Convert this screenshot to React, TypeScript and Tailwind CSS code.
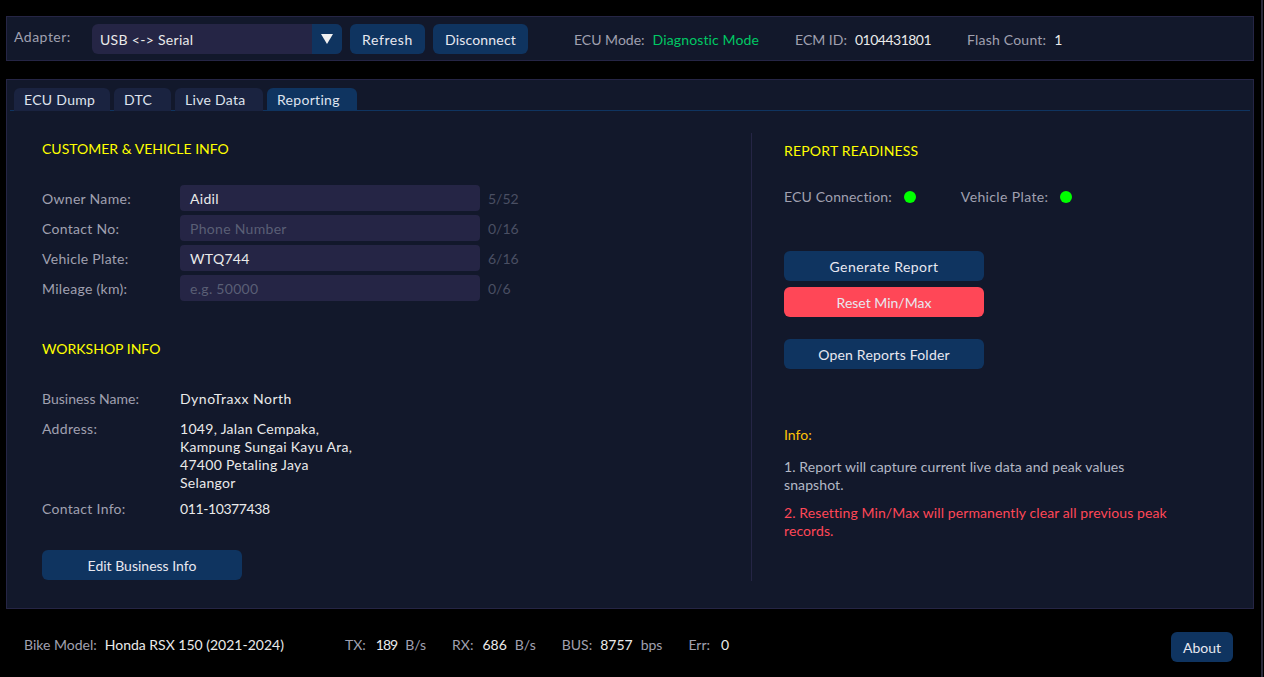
const font = "font-['Lato','Open_Sans',sans-serif]";

const fields = [
  { label: "Owner Name:", value: "Aidil", placeholder: "", count: "5/52" },
  { label: "Contact No:", value: "", placeholder: "Phone Number", count: "0/16" },
  { label: "Vehicle Plate:", value: "WTQ744", placeholder: "", count: "6/16" },
  { label: "Mileage (km):", value: "", placeholder: "e.g. 50000", count: "0/6" },
];

const tabs = [
  { name: "ECU Dump", width: "w-[96px]" },
  { name: "DTC", width: "w-[57px]" },
  { name: "Live Data", width: "w-[88px]" },
  { name: "Reporting", width: "w-[90px]" },
];

const buttonClass =
  "flex items-center justify-center rounded-md bg-[#0f3460] text-[14px] text-[#e8e8f0]";

function Stat({ label, value, unit, valueClass }: { label: string; value: string; unit?: string; valueClass?: string }) {
  return (
    <div className="flex items-center">
      <span className="text-[#a0a0b0]">{label}</span>
      <span className={`${valueClass ?? "ml-2 text-[#eaeaea]"}`}>{value}</span>
      {unit && <span className="ml-2 text-[#a0a0b0]">{unit}</span>}
    </div>
  );
}

function Dot() {
  return <span className="ml-3 h-3 w-3 rounded-full bg-[#00ff00]" />;
}

export default function App() {
  return (
    <div className={`flex h-[677px] w-[1264px] overflow-hidden bg-black text-[14px] ${font}`}>
      <div className="flex w-[1261px] flex-col pl-[6px] pr-[7px]">
        <div className="mt-4 flex h-[45px] items-center border border-[#252545] bg-[#12182b] pl-[7px]">
          <span className="-mt-1 w-[78px] tracking-[0.5px] text-[#a0a0b0]">Adapter:</span>
          <div className="flex h-[30px] w-[250px] overflow-hidden rounded-md bg-[#252545]">
            <span className="flex flex-1 items-center pl-2 pt-[2px] tracking-[0.3px] text-[#eaeaea]">USB &lt;-&gt; Serial</span>
            <span className="flex w-[30px] items-center justify-center bg-[#0f3460]">
              <svg width="14" height="12" viewBox="0 0 14 12"><path d="M1 1h12L7 11z" fill="#f0f0f0" /></svg>
            </span>
          </div>
          <button className={`${buttonClass} ml-2 h-[30px] w-[75px] pt-[2px] tracking-[0.6px]`}>Refresh</button>
          <button className={`${buttonClass} ml-2 h-[30px] w-[95px] pt-[2px] tracking-[0.2px]`}>Disconnect</button>
          <div className="ml-[46px] pt-[2px]"><Stat label="ECU Mode:" value="Diagnostic Mode" valueClass="ml-2 tracking-[0.13px] text-[#00c864]" /></div>
          <div className="ml-9 pt-[2px]"><Stat label="ECM ID:" value="0104431801" valueClass="ml-2 tracking-[-0.5px] text-[#eaeaea]" /></div>
          <div className="ml-9 pt-[2px] tracking-[0.2px]"><Stat label="Flash Count:" value="1" /></div>
        </div>

        <div className="mt-[18px] flex h-[530px] flex-col border border-[#252545] bg-[#12182b] px-[3px] pt-2">
          <div className="flex h-[23px] gap-1 border-b border-[#0f3460] pl-1">
            {tabs.map((tab) => (
              <div
                key={tab.name}
                className={`flex h-[23px] items-center rounded-t-md pl-[10px] tracking-[0.3px] text-[#dfe3ee] ${tab.width} ${tab.name === "Reporting" ? "bg-[#0f3460]" : "bg-[#1a2340]"}`}
              >
                {tab.name}
              </div>
            ))}
          </div>

          <div className="flex flex-1 pt-[22px]">
            <div className="flex h-[448px] w-[742px] flex-col border-r border-[#252545] pl-[32px] tracking-[0.3px]">
              <h3 className="mt-1 h-[18px] translate-y-[3px] leading-[18px] tracking-normal text-[#ffff00]">CUSTOMER &amp; VEHICLE INFO</h3>
              <div className="mt-[30px] flex flex-col gap-1">
                {fields.map((field) => (
                  <div key={field.label} className="flex h-[26px] items-center">
                    <span className="w-[138px] text-[#a0a0b0]">{field.label}</span>
                    <div className="flex h-[26px] w-[300px] items-center rounded bg-[#252545] pl-[10px]">
                      {field.value ? (
                        <span className="text-[#eaeaea]">{field.value}</span>
                      ) : (
                        <span className="text-[#5a5f75]">{field.placeholder}</span>
                      )}
                    </div>
                    <span className="ml-2 tracking-normal text-[#4a4f63]">{field.count}</span>
                  </div>
                ))}
              </div>

              <h3 className="mt-[39px] h-[18px] leading-[18px] tracking-normal text-[#ffff00]">WORKSHOP INFO</h3>
              <div className="mt-[31px] flex h-[18px] items-center">
                <span className="w-[138px] tracking-normal text-[#a0a0b0]">Business Name:</span>
                <span className="tracking-[0.5px] text-[#eaeaea]">DynoTraxx North</span>
              </div>
              <div className="mt-[13px] flex">
                <span className="w-[138px] leading-[18px] text-[#a0a0b0]">Address:</span>
                <span className="leading-[18px] text-[#eaeaea]">
                  1049, Jalan Cempaka,
                  <br />
                  Kampung Sungai Kayu Ara,
                  <br />
                  47400 Petaling Jaya
                  <br />
                  Selangor
                </span>
              </div>
              <div className="mt-[7px] flex h-[18px] items-center">
                <span className="w-[138px] text-[#a0a0b0]">Contact Info:</span>
                <span className="tracking-[-0.4px] text-[#eaeaea]">011-10377438</span>
              </div>
              <button className={`${buttonClass} mt-[33px] h-[30px] w-[200px] tracking-normal`}>Edit Business Info</button>
            </div>

            <div className="flex flex-col pl-[32px]">
              <h3 className="mt-[9px] h-[18px] leading-[18px] tracking-[0.2px] text-[#ffff00]">REPORT READINESS</h3>
              <div className="mt-[28px] flex h-[18px] items-center text-[#a0a0b0]">
                <span className="-mt-[2px] tracking-[0.15px]">ECU Connection:</span>
                <Dot />
                <span className="-mt-[2px] ml-[45px] tracking-[0.37px]">Vehicle Plate:</span>
                <Dot />
              </div>
              <button className={`${buttonClass} mt-[45px] h-[30px] w-[200px] tracking-[0.45px]`}>Generate Report</button>
              <button className={`${buttonClass} mt-[6px] h-[30px] w-[200px] !bg-[#ff4757]`}>Reset Min/Max</button>
              <button className={`${buttonClass} mt-[22px] h-[30px] w-[200px] tracking-[0.2px]`}>Open Reports Folder</button>
              <p className="mt-[57px] leading-[18px] text-[#ffc107]">Info:</p>
              <p className="mt-[14px] w-[388px] leading-[18px] tracking-[0.1px] text-[#b4b8c6]">
                1. Report will capture current live data and peak values snapshot.
              </p>
              <p className="mt-[10px] w-[388px] leading-[18px] tracking-[0.1px] text-[#ff4757]">
                2. Resetting Min/Max will permanently clear all previous peak records.
              </p>
            </div>
          </div>
        </div>

        <div className="flex flex-1 items-center pl-[18px] pr-[21px]">
          <div className="pt-[2px]"><Stat label="Bike Model:" value="Honda RSX 150 (2021-2024)" /></div>
          <div className="ml-[61px] pt-[2px]"><Stat label="TX:" value="189" unit="B/s" valueClass="ml-[10px] tracking-[-1px] text-[#eaeaea]" /></div>
          <div className="ml-[26px] pt-[2px]"><Stat label="RX:" value="686" unit="B/s" valueClass="ml-[9px] text-[#eaeaea]" /></div>
          <div className="ml-[26px] pt-[2px]"><Stat label="BUS:" value="8757" unit="bps" /></div>
          <div className="ml-[26px] pt-[2px]"><Stat label="Err:" value="0" valueClass="ml-[11px] text-[#eaeaea]" /></div>
          <button className={`${buttonClass} ml-auto h-[30px] w-[62px] translate-y-[4px]`}>About</button>
        </div>
      </div>
      <div className="h-full w-[2px] bg-[#2b2b3b]" />
    </div>
  );
}
